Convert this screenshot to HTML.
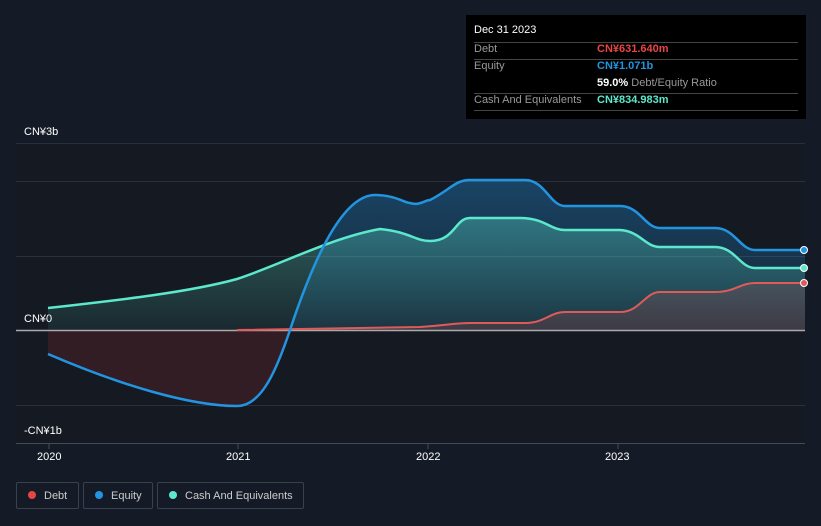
<!DOCTYPE html>
<html><head><style>
body{margin:0;width:821px;height:526px;background:#151b26;font-family:"Liberation Sans",sans-serif;overflow:hidden;position:relative}
.t{position:absolute;color:#fff;font-size:11px}
.tip{position:absolute;left:466px;top:15px;width:340px;height:104px;background:#000;font-size:11px}
.tip .r{position:absolute;left:8px;right:8px;border-bottom:1px solid #444;height:17px}
.leg{position:absolute;top:482px;height:27px;border:1px solid #3a414d;border-radius:2px;color:#ccc;font-size:11px;line-height:27px;box-sizing:border-box}
.dot{display:inline-block;width:8px;height:8px;border-radius:50%;margin:0 8px 0 11px}
</style></head><body>
<svg width="821" height="526" style="position:absolute;left:0;top:0">
<defs>
<linearGradient id="gc" x1="0" y1="0" x2="0" y2="1"><stop offset="0" stop-color="#5ce0c8" stop-opacity=".35"/><stop offset="1" stop-color="#5ce0c8" stop-opacity=".08"/></linearGradient>
<linearGradient id="ge" x1="0" y1="0" x2="0" y2="1"><stop offset="0" stop-color="#2394e0" stop-opacity=".35"/><stop offset="1" stop-color="#2394e0" stop-opacity=".1"/></linearGradient>
</defs>
<rect x="16" y="143" width="789" height="300" fill="#141922"/>
<g stroke="#2a303b" stroke-width="1"><line x1="16" y1="143.5" x2="805" y2="143.5"/><line x1="16" y1="181.5" x2="805" y2="181.5"/><line x1="16" y1="256.5" x2="805" y2="256.5"/><line x1="16" y1="405.5" x2="805" y2="405.5"/><line x1="16" y1="443.5" x2="805" y2="443.5" stroke="#444b57"/></g>
<path d="M48,354 C120,385 190,406 237,406 C260,406 275,375 290,330 L48,330Z" fill="#3a1e26" opacity=".8"/>
<path d="M290,330 C310,270 340,195 375,195 C395,195 410,203 410,203 C420,206 425,200 430,200 C450,190 455,180 470,180 L525,180 C545,180 550,206 565,206 L620,206 C640,206 645,228 660,228 L715,228 C735,228 740,250 755,250 L805,250 L805,330Z" fill="url(#ge)"/>
<path d="M48,308 C120,300 190,292 237,279 C280,265 330,238 380,229 C410,232 415,241 430,241 C455,241 455,218 470,218 L520,218 C545,218 550,230 565,230 L620,230 C640,231 645,247 660,247 L715,247 C735,247 740,268 755,268 L805,268 L805,330 L48,330Z" fill="url(#gc)"/>
<path d="M237,330 L420,327 C450,325 455,323 470,323 L525,323 C545,323 550,312 565,312 L620,312 C640,312 645,292 660,292 L715,292 C735,292 740,283 755,283 L805,283 L805,330 L237,330Z" fill="#e05a5a" opacity=".18"/>
<line x1="16" y1="330.5" x2="805" y2="330.5" stroke="#aaa" stroke-width="1.5"/>
<path d="M48,308 C120,300 190,292 237,279 C280,265 330,238 380,229 C410,232 415,241 430,241 C455,241 455,218 470,218 L520,218 C545,218 550,230 565,230 L620,230 C640,231 645,247 660,247 L715,247 C735,247 740,268 755,268 L805,268" fill="none" stroke="#5ce8cc" stroke-width="2.5"/>
<path d="M237,330 L420,327 C450,325 455,323 470,323 L525,323 C545,323 550,312 565,312 L620,312 C640,312 645,292 660,292 L715,292 C735,292 740,283 755,283 L805,283" fill="none" stroke="#e05a5a" stroke-width="2"/>
<path d="M48,354 C120,385 190,406 237,406 C260,406 275,375 290,330 C310,270 340,195 375,195 C395,195 405,203 410,203 C420,206 425,200 430,200 C450,190 455,180 470,180 L525,180 C545,180 550,206 565,206 L620,206 C640,206 645,228 660,228 L715,228 C735,228 740,250 755,250 L805,250" fill="none" stroke="#2394e0" stroke-width="2.5"/>
<circle cx="804" cy="250" r="3.5" fill="#2394e0" stroke="#fff" stroke-width="1"/>
<circle cx="804" cy="268" r="3.5" fill="#5ce8cc" stroke="#fff" stroke-width="1"/>
<circle cx="804" cy="283" r="3.5" fill="#e05a5a" stroke="#fff" stroke-width="1"/>
<g stroke="#444b57"><line x1="49" y1="444" x2="49" y2="449"/><line x1="238" y1="444" x2="238" y2="449"/><line x1="428" y1="444" x2="428" y2="449"/><line x1="618" y1="444" x2="618" y2="449"/></g>
</svg>
<div class="t" style="left:24px;top:126px">CN¥3b</div>
<div class="t" style="left:24px;top:313px">CN¥0</div>
<div class="t" style="left:24px;top:425px">-CN¥1b</div>
<div class="t" style="left:37px;top:451px">2020</div>
<div class="t" style="left:226px;top:451px">2021</div>
<div class="t" style="left:416px;top:451px">2022</div>
<div class="t" style="left:605px;top:451px">2023</div>
<div class="tip">
<div style="position:absolute;left:8px;top:9px;color:#fff">Dec 31 2023</div>
<div class="r" style="top:10px"></div>
<div class="r" style="top:27px"></div>
<div class="r" style="top:61px"></div>
<div class="r" style="top:78px"></div>
<div style="position:absolute;left:8px;top:28px;color:#999">Debt</div>
<div style="position:absolute;left:131px;top:28px;color:#e84545;font-weight:bold">CN¥631.640m</div>
<div style="position:absolute;left:8px;top:45px;color:#999">Equity</div>
<div style="position:absolute;left:131px;top:45px;color:#2394e0;font-weight:bold">CN¥1.071b</div>
<div style="position:absolute;left:131px;top:62px;color:#999"><b style="color:#fff">59.0%</b> Debt/Equity Ratio</div>
<div style="position:absolute;left:8px;top:79px;color:#999">Cash And Equivalents</div>
<div style="position:absolute;left:131px;top:79px;color:#5ce8cc;font-weight:bold">CN¥834.983m</div>
</div>
<div class="leg" style="left:16px;width:63px"><span class="dot" style="background:#e84545"></span>Debt</div>
<div class="leg" style="left:83px;width:70px"><span class="dot" style="background:#2394e0"></span>Equity</div>
<div class="leg" style="left:157px;width:147px"><span class="dot" style="background:#5ce8cc"></span>Cash And Equivalents</div>
</body></html>
